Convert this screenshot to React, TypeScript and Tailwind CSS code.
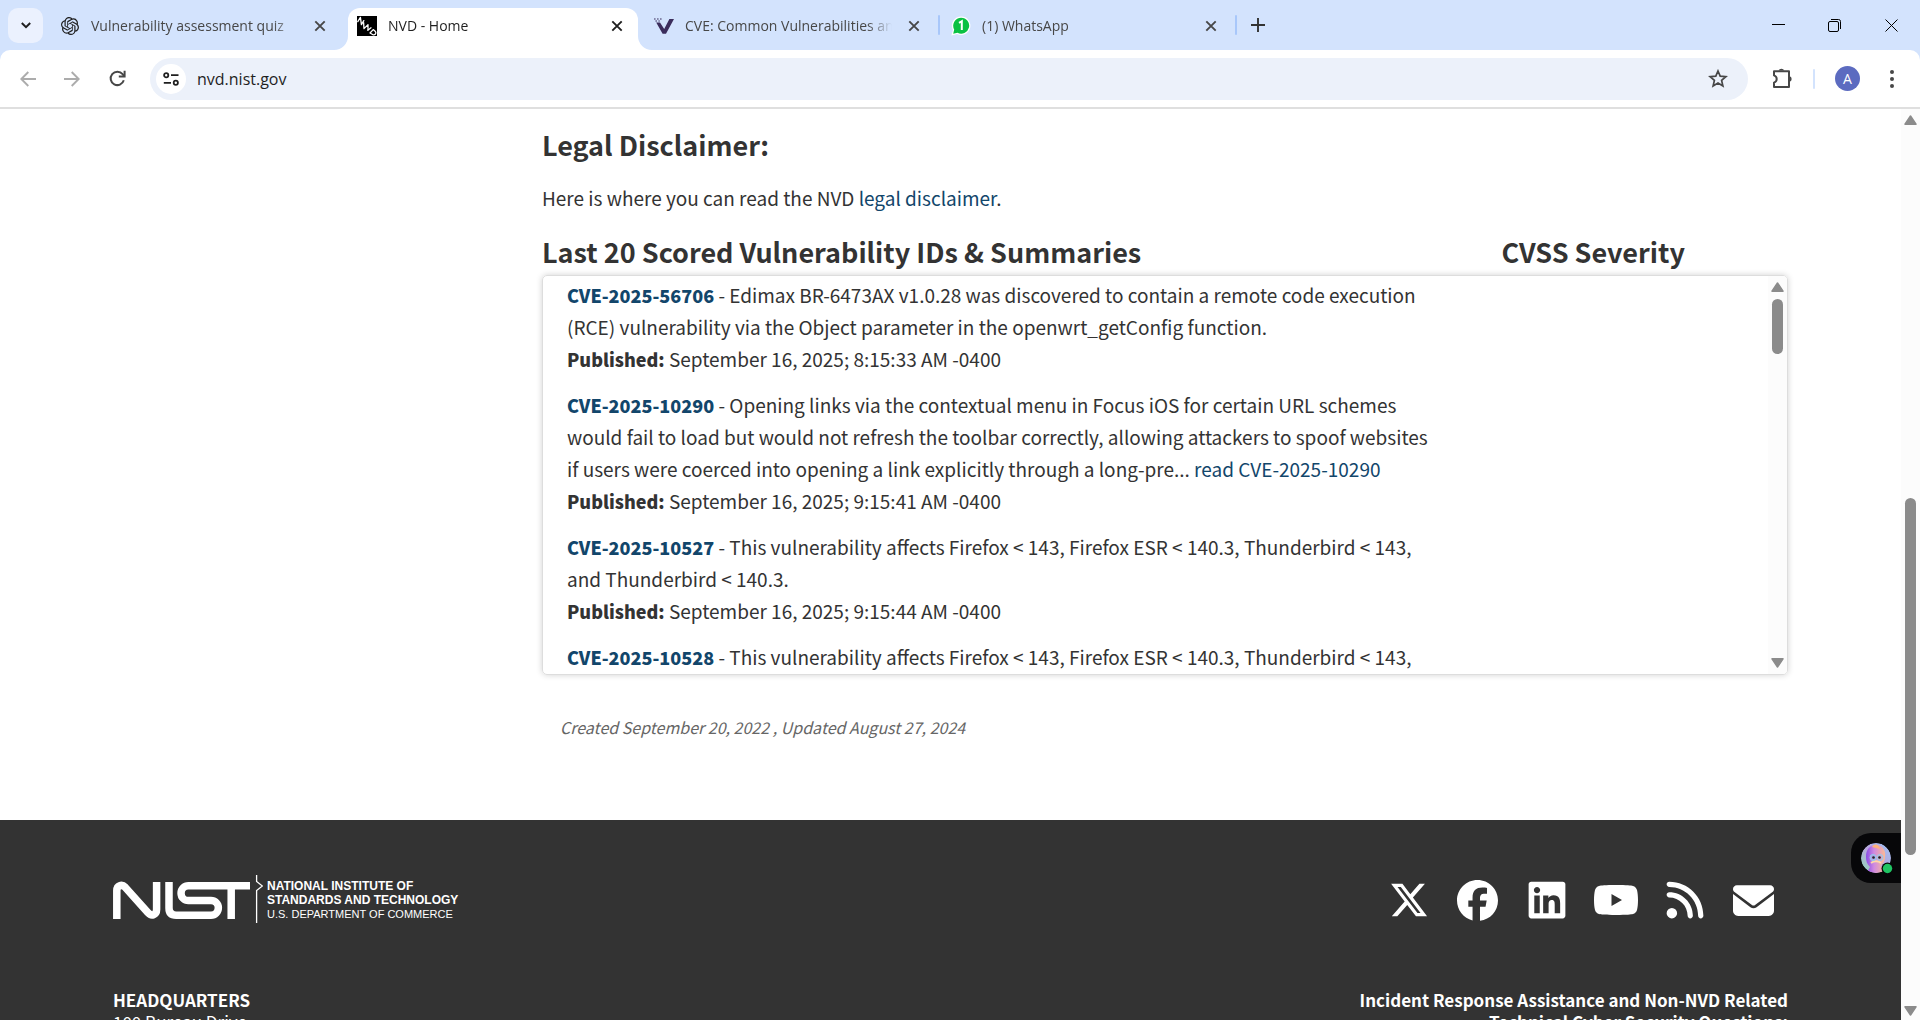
import React from 'react';
import { FaXTwitter, FaFacebook, FaLinkedin, FaRss, FaEnvelope } from 'react-icons/fa6';
import { SiOpenai } from 'react-icons/si';

const CloseIcon = () => (
  <svg viewBox="0 0 12 12" className="size-3" fill="none" stroke="currentColor" strokeWidth="1.9" aria-hidden="true">
    <path d="M1.3 1.3 10.7 10.7M10.7 1.3 1.3 10.7" />
  </svg>
);

const NvdIcon = () => (
  <svg viewBox="0 0 20 20" className="size-5" aria-hidden="true">
    <rect width="20" height="20" fill="#000" />
    <g fill="none" stroke="#fff" strokeWidth="1.3" strokeLinejoin="round" strokeLinecap="round">
      <path d="M.8 5.6 3.4 1.4 4.4 8.6 6.8 4.6" />
      <path d="M6.6 6.6 7 12.6 11 8.600 11 13.8" />
      <path d="M10.800 14.200 14 11.800" />
      <path d="M13 17 16.200 13.600 18.400 15.600C19.600 17.400 18 19.200 16 18.800L13 17Z" />
    </g>
  </svg>
);

const CveIcon = () => (
  <svg viewBox="0 0 20 20" className="size-5" aria-hidden="true">
    <path d="M2.2 6.4H6L10.2 13 15.4 3H20L12 17.8H8.600Z" fill="#3b2d5c" />
    <path d="M0 3h1.600M3 3h1.600M6 3h1.600M1.400 5h1.600M4.400 5h1.400" stroke="#3b2d5c" strokeWidth="1.200" />
  </svg>
);

const WhatsAppIcon = () => (
  <svg viewBox="0 0 20 20" className="size-5" aria-hidden="true">
    <path d="M10.2.4a9.3 9.3 0 0 0-8.3 13.5L.4 19.4l5.700-1.300A9.3 9.3 0 1 0 10.2.4Z" fill="#fff" />
    <path d="M10.2 1.7a8 8 0 0 0-7 11.900l-1 4.200 4.300-1A8 8 0 1 0 10.2 1.7Z" fill="#0ac143" />
    <path d="M8 6.8 10.8 5.2V14" fill="none" stroke="#fff" strokeWidth="2" />
  </svg>
);

const tabs = [
  { title: 'Vulnerability assessment quiz', icon: <SiOpenai className="size-[18px]" />, active: false, divider: false },
  { title: 'NVD - Home', icon: <NvdIcon />, active: true, divider: false },
  { title: 'CVE: Common Vulnerabilities and Exposures', icon: <CveIcon />, active: false, divider: true },
  { title: '(1) WhatsApp', icon: <WhatsAppIcon />, active: false, divider: true },
];

function Flare({ side }: { side: 'left' | 'right' }) {
  return (
    <svg
      viewBox="0 0 14 14"
      className={side === 'left' ? 'absolute bottom-0 right-full size-3.5' : 'absolute bottom-0 left-full size-3.5'}
      aria-hidden="true"
    >
      <path d={side === 'left' ? 'M14 0V14H0A14 14 0 0 0 14 0Z' : 'M0 0V14H14A14 14 0 0 1 0 0Z'} fill="#fff" />
    </svg>
  );
}

function TabStrip() {
  return (
    <header className="flex h-[50px] shrink-0 items-center bg-[#d3e3fd] pl-2 text-[#474747]">
      <button aria-label="Search tabs" className="flex size-[35px] items-center justify-center rounded-[10px] bg-[#ebf1fe] text-[#1f1f1f]">
        <svg viewBox="0 0 10 7" className="h-[7px] w-2.5" fill="none" stroke="currentColor" strokeWidth="2">
          <path d="M.8 1 5 5.2 9.2 1" />
        </svg>
      </button>
      <nav className="ml-2 flex h-full min-w-0" aria-label="Tabs">
        {tabs.map((t) => (
          <div key={t.title} className="flex h-full w-[297px] min-w-0 items-end">
            <div
              className={
                t.active
                  ? 'relative flex h-[42px] min-w-0 flex-1 items-center rounded-t-[12px] bg-white pb-1.5 pl-[9px] pr-[15px] text-[#1f1f1f]'
                  : 'relative flex h-[42px] min-w-0 flex-1 items-center pb-1.5 pl-[9px] pr-[15px]'
              }
            >
              {t.active && <Flare side="left" />}
              {t.active && <Flare side="right" />}
              <button className="flex min-w-0 flex-1 items-center gap-[11px] text-left">
                <span className="flex size-5 shrink-0 items-center justify-center text-[#1f1f1f]">{t.icon}</span>
                <span className="min-w-0 flex-1 overflow-hidden whitespace-nowrap text-sm leading-5 [mask-image:linear-gradient(to_right,#000_88%,transparent)]">
                  {t.title}
                </span>
              </button>
              <button aria-label={`Close ${t.title}`} className="ml-4 shrink-0">
                <CloseIcon />
              </button>
            </div>
            <span className="flex h-full w-[7px] items-center justify-center">
              {t.divider && <span className="h-5 w-0.5 rounded bg-[#a8c7fa]" />}
            </span>
          </div>
        ))}
      </nav>
      <button aria-label="New tab" className="ml-3">
        <svg viewBox="0 0 14 14" className="size-3.5" fill="none" stroke="#333" strokeWidth="1.9">
          <path d="M7 0V14M0 7H14" />
        </svg>
      </button>
      <div className="ml-auto flex h-full items-center text-black">
        <button aria-label="Minimize" className="flex w-14 justify-center">
          <svg viewBox="0 0 13 13" className="size-[13px]" stroke="currentColor">
            <path d="M0 5.5H13" />
          </svg>
        </button>
        <button aria-label="Restore" className="flex w-14 justify-center">
          <svg viewBox="0 0 13 13" className="size-[13px]" fill="none" stroke="currentColor">
            <rect x=".5" y="2.5" width="10" height="10" rx="1.5" />
            <path d="M3 .5H10.5A2 2 0 0 1 12.5 2.5V10" />
          </svg>
        </button>
        <button aria-label="Close window" className="flex w-[58px] justify-center">
          <svg viewBox="0 0 13 13" className="size-[13px]" fill="none" stroke="currentColor">
            <path d="M.5.5 12.5 12.5M12.5.5.5 12.5" />
          </svg>
        </button>
      </div>
    </header>
  );
}

function Toolbar() {
  return (
    <div className="bg-[#d3e3fd]">
      <div className="flex h-[59px] items-center rounded-t-[10px] border-b-2 border-[#dfdfdf] bg-white pl-5 pr-[26px] text-[#474747]">
        <button aria-label="Back" className="text-[#acacac]">
          <svg viewBox="0 0 16 16" className="size-4" fill="none" stroke="currentColor" strokeWidth="1.9">
            <path d="M16 8H1.5M8.3 1 1.3 8l7 7" />
          </svg>
        </button>
        <button aria-label="Forward" className="ml-7 text-[#acacac]">
          <svg viewBox="0 0 16 16" className="size-4" fill="none" stroke="currentColor" strokeWidth="1.9">
            <path d="M0 8H14.5M7.7 1l7 7-7 7" />
          </svg>
        </button>
        <button aria-label="Reload" className="ml-[29px]">
          <svg viewBox="0 0 17 17" className="size-[17px]" fill="none" stroke="currentColor" strokeWidth="2">
            <path d="M14.8 10.3A6.7 6.7 0 1 1 13.6 4.2L15 6" />
            <path d="M15.6.8V6.6H9.8" />
          </svg>
        </button>
        <div className="ml-6 flex h-[42px] min-w-0 flex-1 items-center rounded-full bg-[#ecf1fa] pl-1.5 pr-5">
          <button aria-label="View site information" className="flex size-[30px] shrink-0 items-center justify-center rounded-full bg-white">
            <svg viewBox="0 0 16 14" className="h-3.5 w-4" fill="none" stroke="#1f1f1f" strokeWidth="1.8">
              <circle cx="3.2" cy="3.2" r="2.1" />
              <path d="M8 3.2H15.5M.8 10.8H8" />
              <circle cx="12.8" cy="10.8" r="2.1" />
            </svg>
          </button>
          <input
            aria-label="Address and search bar"
            defaultValue="nvd.nist.gov"
            className="ml-[11px] h-8 min-w-0 flex-1 bg-transparent text-base text-[#1f1f1f] outline-none"
          />
          <button aria-label="Bookmark this tab">
            <svg viewBox="0 0 20 19" className="h-[19px] w-5" fill="none" stroke="currentColor" strokeWidth="1.7">
              <path d="M10 2 12.2 7.2 17.9 7.7 13.6 11.4 14.9 17 10 14 5.1 17 6.4 11.4 2.1 7.7 7.8 7.2Z" />
            </svg>
          </button>
        </div>
        <button aria-label="Extensions" className="ml-6">
          <svg viewBox="0 0 21 21" className="size-[21px]" fill="none" stroke="currentColor" strokeWidth="2">
            <path d="M2 3.200H17V19H2V14.600C5.600 13.400 5.600 8.600 2 7.400Z" strokeLinejoin="round" />
            <path d="M6.600 2.600a2.900 2.500 0 0 1 5.600 0ZM17.800 8.200a2.500 2.900 0 0 1 0 5.600Z" fill="currentColor" stroke="none" />
          </svg>
        </button>
        <span className="ml-5 h-5 w-0.5 rounded bg-[#d3e3fd]" />
        <button aria-label="Profile" className="ml-5 flex size-[25px] items-center justify-center rounded-full bg-[#5c6bc0] text-sm text-white">
          A
        </button>
        <button aria-label="Menu" className="ml-[30px]">
          <svg viewBox="0 0 4 18" className="h-[18px] w-1" fill="currentColor">
            <circle cx="2" cy="2" r="2" />
            <circle cx="2" cy="9" r="2" />
            <circle cx="2" cy="16" r="2" />
          </svg>
        </button>
      </div>
    </div>
  );
}

function Arrow({ up = false }: { up?: boolean }) {
  return (
    <svg viewBox="0 0 13 10" className="h-2.5 w-[13px] shrink-0" fill="#8b8b8b" stroke="#8b8b8b" strokeWidth="1.5" strokeLinejoin="round" aria-hidden="true">
      <path d={up ? 'M1 9.2H12L6.5 1Z' : 'M1 .8H12L6.5 9Z'} />
    </svg>
  );
}

const entries = [
  {
    id: 'CVE-2025-56706',
    text: 'Edimax BR-6473AX v1.0.28 was discovered to contain a remote code execution (RCE) vulnerability via the Object parameter in the openwrt_getConfig function.',
    more: false,
    date: 'September 16, 2025; 8:15:33 AM -0400',
  },
  {
    id: 'CVE-2025-10290',
    text: 'Opening links via the contextual menu in Focus iOS for certain URL schemes would fail to load but would not refresh the toolbar correctly, allowing attackers to spoof websites if users were coerced into opening a link explicitly through a long-pre...',
    more: true,
    date: 'September 16, 2025; 9:15:41 AM -0400',
  },
  {
    id: 'CVE-2025-10527',
    text: 'This vulnerability affects Firefox < 143, Firefox ESR < 140.3, Thunderbird < 143, and Thunderbird < 140.3.',
    more: false,
    date: 'September 16, 2025; 9:15:44 AM -0400',
  },
  {
    id: 'CVE-2025-10528',
    text: 'This vulnerability affects Firefox < 143, Firefox ESR < 140.3, Thunderbird < 143, and Thunderbird < 140.3.',
    more: false,
    date: 'September 16, 2025; 9:15:45 AM -0400',
  },
];

function Vulnerabilities() {
  return (
    <div className="flex h-[400px] overflow-hidden rounded-[5px] border border-[#ddd] shadow-[0_0_6px_rgba(0,0,0,0.18)]">
      <ul className="min-w-0 flex-1 pl-6 pt-[3px]">
        {entries.map((e) => (
          <li key={e.id} className="mb-3.5 w-[72%]">
            <p>
              <a href="#" className="text-lg font-black leading-none text-[#12466b]">{e.id}</a> - {e.text}{' '}
              {e.more && <a href="#" className="text-[#12466b]">read {e.id}</a>}
            </p>
            <p>
              <strong className="text-lg font-black leading-none">Published:</strong> {e.date}
            </p>
          </li>
        ))}
      </ul>
      <div className="flex w-[19px] flex-col items-center bg-[#fcfcfc] py-1.5">
        <Arrow up />
        <span className="mt-[7px] h-[55px] w-[11px] rounded-full bg-[#8b8b8b]" />
        <span className="flex-1" />
        <Arrow />
      </div>
    </div>
  );
}

const NistLogo = () => (
  <a href="#" className="flex items-center text-white">
    <svg viewBox="0 0 150 50" className="h-[50px] w-[150px]" fill="none" stroke="#fff" role="img" aria-label="NIST">
      <g strokeWidth="7.5">
        <path d="M3.8 44V15.5C3.8 10.5 8.8 8.8 12.2 12.2L34.8 37.6C38.6 41.8 43.6 39.8 43.6 34.6V7" />
        <path d="M56 7V33Q56 40.2 63.2 40.2H98A7.2 7.2 0 0 0 98 25.5H75.4A7.3 7.3 0 0 1 75.4 10.8H137" />
        <path d="M118.2 10.8V44" />
      </g>
      <path d="M143.6 0V6.4L149.4 11 143.6 15.6V48" strokeWidth="1.3" />
    </svg>
    <span className="ml-1 flex flex-col whitespace-nowrap font-['Liberation_Sans'] text-xs leading-3.5">
      <span className="font-bold">NATIONAL INSTITUTE OF</span>
      <span className="font-bold">STANDARDS AND TECHNOLOGY</span>
      <span className="text-[11px]">U.S. DEPARTMENT OF COMMERCE</span>
    </span>
  </a>
);

const social = [
  { name: 'X', icon: <FaXTwitter className="size-10" /> },
  { name: 'Facebook', icon: <FaFacebook className="size-[41px]" /> },
  { name: 'LinkedIn', icon: <FaLinkedin className="size-[42px]" /> },
  {
    name: 'YouTube',
    icon: (
      <svg viewBox="0 0 44 30" className="h-[30px] w-11" aria-hidden="true">
        <path
          fill="#fff"
          fillRule="evenodd"
          d="M22 0C33 0 37 .4 39 .9 41 1.5 42.4 3 43 5 43.7 8 44 11 44 15S43.7 22 43 25C42.4 27 41 28.5 39 29.1 37 29.6 33 30 22 30S7 29.6 5 29.1C3 28.5 1.6 27 1 25 .3 22 0 19 0 15S.3 8 1 5C1.6 3 3 1.5 5 .9 7 .4 11 0 22 0ZM17.5 9V21L28 15Z"
        />
      </svg>
    ),
  },
  { name: 'RSS', icon: <FaRss className="size-[42px]" /> },
  { name: 'Email', icon: <FaEnvelope className="size-[41px]" /> },
];

function Footer() {
  return (
    <footer className="relative flex-1 bg-[#333] px-[113px] pt-[50px] text-white">
      <div className="flex items-center justify-between">
        <NistLogo />
        <ul className="flex">
          {social.map((s) => (
            <li key={s.name}>
              <a href="#" aria-label={s.name} className="flex h-[60px] w-[69px] items-center justify-center">
                {s.icon}
              </a>
            </li>
          ))}
        </ul>
      </div>
      <div className="mt-[59px] flex justify-between text-[17px] leading-[22px]">
        <address className="not-italic">
          <strong>HEADQUARTERS</strong>
          <br />
          100 Bureau Drive
        </address>
        <p className="text-right font-bold">
          Incident Response Assistance and Non-NVD Related
          <br />
          Technical Cyber Security Questions:
        </p>
      </div>
      <button aria-label="Open assistant" className="absolute right-0 top-[13px] flex h-[50px] w-[50px] items-center rounded-l-[20px] bg-[#070709] pl-2.5">
        <svg viewBox="0 0 34 32" className="h-8 w-[34px]" aria-hidden="true">
          <defs>
            <linearGradient id="bg" x1="0" y1="1" x2="1" y2="0">
              <stop offset="0" stopColor="#8fdcb8" />
              <stop offset=".5" stopColor="#b9a6dd" />
              <stop offset="1" stopColor="#9cc4f5" />
            </linearGradient>
            <linearGradient id="face" x1="0" y1="0" x2="1" y2="0">
              <stop offset="0" stopColor="#8a4be6" />
              <stop offset=".4" stopColor="#d08ae0" />
              <stop offset="1" stopColor="#ffbd90" />
            </linearGradient>
            <clipPath id="disc">
              <circle cx="15" cy="16" r="15" />
            </clipPath>
          </defs>
          <g clipPath="url(#disc)">
            <circle cx="15" cy="16" r="15" fill="url(#bg)" />
            <path d="M5 15C5 7 9 3 15 3 22 3 25 9 24 15 24 20 21 22 20 24L25 32H5L9 25C6 22 5 19 5 15Z" fill="url(#face)" />
            <path d="M11 5C13 1 18 2 19 7Z" fill="#ffb27a" />
            <path d="M10 21C13 19 17 19 20 21" stroke="#ffd9a8" strokeWidth="2" fill="none" />
            <circle cx="12" cy="15.5" r="3" fill="#b4a2e8" stroke="#8ed0ee" />
            <circle cx="19" cy="15.5" r="3" fill="#d6a6c8" stroke="#8ed0ee" />
            <circle cx="12.5" cy="15.5" r="1.3" fill="#222" />
            <circle cx="18.5" cy="15.5" r="1.3" fill="#222" />
          </g>
          <circle cx="26.5" cy="26.5" r="6" fill="#070709" />
          <circle cx="26.5" cy="26.5" r="4.7" fill="#20c463" />
        </svg>
      </button>
    </footer>
  );
}

export default function App() {
  return (
    <div className="flex h-screen flex-col overflow-hidden bg-white font-['Open_Sans',sans-serif]">
      <TabStrip />
      <Toolbar />
      <div className="flex min-h-0 flex-1">
        <div className="flex min-w-0 flex-1 flex-col overflow-hidden font-['Noto_Sans_CJK_SC','Noto_Sans_CJK_JP',sans-serif] text-[#333]">
          <main className="flex shrink-0 px-[113px] pb-[77px] pt-4 text-[19px] leading-8">
            <aside className="w-[429px] shrink-0" />
            <section className="min-w-0 flex-1">
              <h2 className="text-[27px] font-bold leading-10">Legal Disclaimer:</h2>
              <p className="mt-[17px]">
                Here is where you can read the NVD <a href="#" className="text-[#12466b]">legal disclaimer</a>.
              </p>
              <div className="mt-[18px] flex text-[27px] font-bold leading-10">
                <h2 className="w-[77%]">Last 20 Scored Vulnerability IDs &amp; Summaries</h2>
                <h2>CVSS Severity</h2>
              </div>
              <div className="mt-[3px]">
                <Vulnerabilities />
              </div>
              <p className="ml-[18px] mt-9 text-base italic leading-8 text-[#666]">Created September 20, 2022 , Updated August 27, 2024</p>
            </section>
          </main>
          <Footer />
        </div>
        <div className="flex w-[19px] shrink-0 flex-col items-center bg-[#fcfcfc] pb-1 pt-1.5">
          <Arrow up />
          <span className="flex-[373]" />
          <span className="w-[11px] flex-[357] rounded-full bg-[#8b8b8b]" />
          <span className="flex-[151]" />
          <Arrow />
        </div>
      </div>
    </div>
  );
}
